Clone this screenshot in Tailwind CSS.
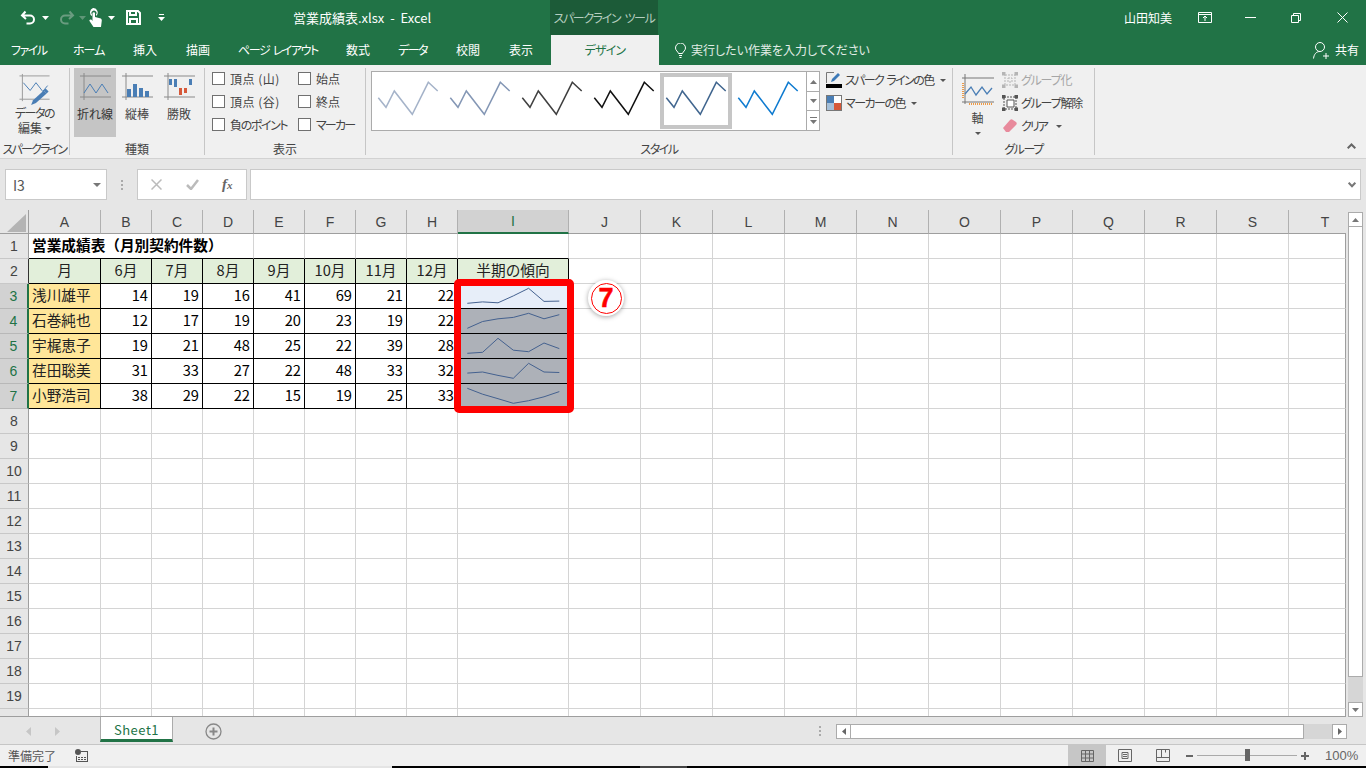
<!DOCTYPE html>
<html lang="ja">

<head>
    <meta charset="UTF-8">
    <title>営業成績表.xlsx - Excel</title>
    <script src="https://cdn.jsdelivr.net/npm/@tailwindcss/browser@4"></script>
</head>

<body class="w-[1366px] h-[768px] overflow-hidden bg-[#f0f0f0] text-[12px] leading-none text-[#444] font-['Noto_Sans_CJK_JP','Noto_Sans',sans-serif] [font-feature-settings:'palt']">

    <!-- Title bar -->
    <div class="flex items-center h-[35px] bg-[#217346] text-white">
        <svg class="shrink-0 ml-[20px] w-[17px] h-[16px]" viewBox="0 0 17 16" fill="none" stroke="#fff" stroke-width="2"><path d="M5.5 1.5 2 5.5 6 9M2.5 5.5H10a4 4 0 0 1 0 8H6.500"/></svg>
        <svg class="shrink-0 ml-[5px] w-[7px] h-[4px]" viewBox="0 0 7 4" fill="#fff"><path d="M0 0h7L3.500 4z"/></svg>
        <svg class="shrink-0 ml-[9px] w-[17px] h-[16px]" viewBox="0 0 17 16" fill="none" stroke="#6a9c80" stroke-width="2"><path d="M11.500 1.500 15 5.500 11 9M14.500 5.500H7a4 4 0 0 0 0 8h3.500"/></svg>
        <svg class="shrink-0 ml-[4px] w-[7px] h-[4px]" viewBox="0 0 7 4" fill="#5f9677"><path d="M0 0h7L3.500 4z"/></svg>
        <svg class="shrink-0 ml-[2px] w-[15px] h-[19px]" viewBox="0 0 15 19" fill="#fff"><path d="M5 0a4.500 4.500 0 0 1 3 8V6.500a2.500 2.500 0 1 0-4 0V8a4.500 4.500 0 0 1 1-8z"/><path d="M5 4.500a1.200 1.200 0 0 1 2 .8V9l5 1.200c1.200.3 1.800 1 1.800 2.200L13 19H5.500L1.500 13c-.5-1 .8-2.200 2-1.200L4.500 13V5.300a1 1 0 0 1 .5-.8z"/></svg>
        <svg class="shrink-0 ml-[5px] w-[7px] h-[4px]" viewBox="0 0 7 4" fill="#fff"><path d="M0 0h7L3.500 4z"/></svg>
        <svg class="shrink-0 ml-[11px] w-[15px] h-[15px]" viewBox="0 0 15 15" fill="none" stroke="#fff" stroke-width="2"><path d="M1 1h11l2 2v11H1z"/><path d="M4 1v4h6V1M4 14V9h7v5"/></svg>
        <svg class="shrink-0 ml-[17px] w-[7px] h-[7px]" viewBox="0 0 7 7" fill="#fff"><path d="M1 0h5v1H1zM0 3h7L3.500 7z"/></svg>
        <div class="shrink-0 ml-[128px] w-[257px] text-[13px] whitespace-nowrap">営業成績表.xlsx&nbsp; - &nbsp;Excel</div>
        <div class="shrink-0 flex items-center justify-center w-[108px] h-[35px] bg-[#1c5b38] text-[12px] tracking-[-1.4px] [word-spacing:3px] whitespace-nowrap text-[#b5cdbf]">スパークライン ツール</div>
        <div class="shrink-0 ml-[466px] w-[74px] text-[12px]">山田知美</div>
        <svg class="shrink-0 w-[14px] h-[11px]" viewBox="0 0 14 11" fill="none" stroke="#fff"><path d="M.5.500h13v10H.500zM1 2.500h12M7 9V4.500M5 6l2-2 2 2"/></svg>
        <div class="shrink-0 ml-[33px] w-[11px] h-px bg-white"></div>
        <svg class="shrink-0 ml-[35px] w-[10px] h-[10px]" viewBox="0 0 10 10" fill="none" stroke="#fff"><path d="M.5 2.500h7v7h-7zM2.500 2.500v-2h7v7h-2"/></svg>
        <svg class="shrink-0 ml-[36px] w-[11px] h-[11px]" viewBox="0 0 11 11" fill="none" stroke="#fff"><path d="M.5.500l10 10M10.500.500l-10 10"/></svg>
    </div>

    <!-- Tabs -->
    <div class="flex items-center h-[30px] bg-[#217346] text-white text-[12px] whitespace-nowrap">
        <div class="shrink-0 ml-[11px] w-[62px] tracking-[-1.5px]">ファイル</div>
        <div class="shrink-0 w-[60px] tracking-[-1px]">ホーム</div>
        <div class="shrink-0 w-[53px]">挿入</div>
        <div class="shrink-0 w-[52px]">描画</div>
        <div class="shrink-0 w-[108px] tracking-[-1.4px] [word-spacing:2px]">ページ レイアウト</div>
        <div class="shrink-0 w-[52px]">数式</div>
        <div class="shrink-0 w-[58px] tracking-[-1.5px]">データ</div>
        <div class="shrink-0 w-[53px]">校閲</div>
        <div class="shrink-0 w-[42px]">表示</div>
        <div class="shrink-0 flex items-center justify-center w-[108px] h-[30px] bg-[#f0f0f0] text-[#217346] tracking-[-0.8px]">デザイン</div>
        <svg class="shrink-0 ml-[16px] w-[11px] h-[15px]" viewBox="0 0 11 15" fill="none" stroke="#fff"><path d="M3.500 10.500C3 8.500.5 7.500.5 5a5 5 0 0 1 10 0c0 2.500-2.500 3.500-3 5.500zM4 12.500h3M4.500 14.500h2"/></svg>
        <div class="shrink-0 ml-[5px] w-[622px] text-[#e3ede7]">実行したい作業を入力してください</div>
        <svg class="shrink-0 w-[16px] h-[17px]" viewBox="0 0 16 17" fill="none" stroke="#fff"><circle cx="7" cy="5" r="4.500"/><path d="M.5 16.500c.5-4 2.500-7 6.500-7M10 14h6M13 11v6"/></svg>
        <div class="shrink-0 ml-[6px]">共有</div>
    </div>

    <!-- Ribbon -->
    <div class="flex h-[94px] pt-[3px] border-b border-[#d2d2d2] bg-[#f0f0f0]">
        <!-- Sparkline group -->
        <div class="shrink-0 flex flex-col items-center w-[70px] h-[87px] border-r border-[#c6c6c6]">
            <svg class="shrink-0 mt-[5px] w-[32px] h-[33px]" viewBox="0 0 32 34" fill="none">
                <path d="M3 1v28M0 3h31M0 27h31" stroke="#9a9a9a"/>
                <path d="M4 10l7 8 6-8 7 9 5-6" stroke="#4a7eb5"/>
                <path d="M12 33l2-5 11-10 3 3-11 10z" fill="#4a7eb5"/><path d="M25 18l2-2 3 3-2 2z" fill="#4a7eb5"/>
            </svg>
            <div class="shrink-0 h-[14px] leading-[14px] tracking-[-1.5px]">データの</div>
            <div class="shrink-0 mt-px h-[14px] leading-[14px] flex items-center gap-[3px]">編集 <svg class="w-[6px] h-[3px]" viewBox="0 0 6 3" fill="#555"><path d="M0 0h6L3 3z"/></svg></div>
            <div class="shrink-0 mt-[8px] whitespace-nowrap tracking-[-1.8px]">スパークライン</div>
        </div>
        <!-- Type group -->
        <div class="shrink-0 flex flex-col w-[135px] h-[87px] border-r border-[#c6c6c6]">
            <div class="flex h-[69px] pl-[4px]">
                <div class="flex flex-col items-center w-[42px] bg-[#c5c5c5]">
                    <svg class="shrink-0 mt-[5px] w-[31px] h-[27px]" viewBox="0 0 31 27" fill="none"><path d="M4 0v27M0 3h31M0 24h31" stroke="#8a8a8a"/><path d="M4 20l6-9 6 9 6-9 6 9" stroke="#4a7eb5"/></svg>
                    <div class="mt-[8px] text-[#333]">折れ線</div>
                </div>
                <div class="flex flex-col items-center w-[42px]">
                    <svg class="shrink-0 mt-[5px] w-[31px] h-[27px]" viewBox="0 0 31 27" fill="none"><path d="M4 0v27M0 3h31M0 24h31" stroke="#8a8a8a"/><path d="M5 16h4v8H5zM11 11h4v13h-4zM17 15h4v9h-4zM23 18h4v6h-4z" fill="#4a7eb5"/></svg>
                    <div class="mt-[8px]">縦棒</div>
                </div>
                <div class="flex flex-col items-center w-[42px]">
                    <svg class="shrink-0 mt-[5px] w-[31px] h-[27px]" viewBox="0 0 31 27" fill="none"><path d="M4 0v27M0 3h31M0 24h31" stroke="#8a8a8a"/><path d="M5 6h3v6H5zM10 6h3v8h-3zM25 6h3v6h-3z" fill="#4a7eb5"/><path d="M15 15h3v7h-3zM20 15h3v5h-3z" fill="#d6593a"/></svg>
                    <div class="mt-[8px]">勝敗</div>
                </div>
            </div>
            <div class="mt-[6px] text-center">種類</div>
        </div>
        <!-- Show group -->
        <div class="shrink-0 flex flex-col w-[161px] h-[87px] border-r border-[#c6c6c6]">
            <div class="grid grid-cols-[86px_auto] content-start gap-y-[10px] pl-[7px] pt-[4px] h-[75px] whitespace-nowrap">
                <div class="flex items-center gap-[5px] h-[13px]"><span class="w-[13px] h-[13px] bg-white border border-[#707070]"></span><span class="tracking-[0.5px]">頂点 (山)</span></div>
                <div class="flex items-center gap-[5px] h-[13px]"><span class="w-[13px] h-[13px] bg-white border border-[#707070]"></span>始点</div>
                <div class="flex items-center gap-[5px] h-[13px]"><span class="w-[13px] h-[13px] bg-white border border-[#707070]"></span><span class="tracking-[0.5px]">頂点 (谷)</span></div>
                <div class="flex items-center gap-[5px] h-[13px]"><span class="w-[13px] h-[13px] bg-white border border-[#707070]"></span>終点</div>
                <div class="flex items-center gap-[5px] h-[13px]"><span class="w-[13px] h-[13px] bg-white border border-[#707070]"></span><span class="tracking-[-1.4px]">負のポイント</span></div>
                <div class="flex items-center gap-[5px] h-[13px]"><span class="w-[13px] h-[13px] bg-white border border-[#707070]"></span><span class="tracking-[-1.8px]">マーカー</span></div>
            </div>
            <div class="text-center">表示</div>
        </div>
        <!-- Style group -->
        <div class="shrink-0 flex flex-col w-[587px] h-[87px] border-r border-[#c6c6c6]">
            <div class="flex h-[75px] pl-[5px] pt-[3px]">
                <div id="gallery" class="shrink-0 flex w-[435px] h-[60px] py-px bg-white border border-[#ababab] border-r-0"></div>
                <div class="shrink-0 flex flex-col w-[14px] h-[60px] bg-white border border-[#ababab]">
                    <div class="flex items-center justify-center h-[20px] border-b border-[#ababab]"><svg class="w-[7px] h-[4px]" viewBox="0 0 7 4" fill="#777"><path d="M3.500 0 7 4H0z"/></svg></div>
                    <div class="flex items-center justify-center h-[19px] border-b border-[#ababab]"><svg class="w-[7px] h-[4px]" viewBox="0 0 7 4" fill="#777"><path d="M0 0h7L3.500 4z"/></svg></div>
                    <div class="flex items-center justify-center flex-1"><svg class="w-[7px] h-[7px]" viewBox="0 0 7 7" fill="#777"><path d="M0 0h7v1H0zM0 3h7L3.500 7z"/></svg></div>
                </div>
                <div class="flex flex-col gap-[7px] ml-[6px] pt-px whitespace-nowrap">
                    <div class="flex items-center h-[16px]">
                        <svg class="shrink-0 w-[16px] h-[16px]" viewBox="0 0 16 16" fill="none"><path d="M8 .5H.5V11" stroke="#777"/><path d="M5 10l1-3 6-6 2 2-6 6z" fill="#3d7ab8"/><path d="M0 12h16v4H0z" fill="#000"/></svg>
                        <span class="ml-[3px] tracking-[-1.6px] [word-spacing:2px]">スパーク ラインの色</span>
                        <svg class="ml-[6px] w-[6px] h-[3px]" viewBox="0 0 6 3" fill="#555"><path d="M0 0h6L3 3z"/></svg>
                    </div>
                    <div class="flex items-center h-[16px]">
                        <svg class="shrink-0 w-[16px] h-[16px]" viewBox="0 0 16 16"><path d="M0 0h16v16H0z" fill="#777"/><path d="M1 1h7v7H1z" fill="#4a7eb5"/><path d="M8 1h7v7H8z" fill="#fff"/><path d="M1 8h7v7H1z" fill="#a5c0da"/><path d="M8 8h7v7H8z" fill="#d6593a"/></svg>
                        <span class="ml-[3px] tracking-[-1.5px]">マーカーの色</span>
                        <svg class="ml-[6px] w-[6px] h-[3px]" viewBox="0 0 6 3" fill="#555"><path d="M0 0h6L3 3z"/></svg>
                    </div>
                </div>
            </div>
            <div class="text-center tracking-[-1.5px]">スタイル</div>
        </div>
        <!-- Group group -->
        <div class="shrink-0 flex flex-col w-[142px] h-[87px] border-r border-[#c6c6c6]">
            <div class="flex h-[75px]">
                <div class="flex flex-col items-center w-[49px] pt-[6px]">
                    <svg class="shrink-0 w-[32px] h-[32px]" viewBox="0 0 32 32" fill="none"><path d="M3 0v30M0 4h32M0 28h32" stroke="#777"/><path d="M3 20l6-7 5 8 6-8 5 7 5-6" stroke="#4a7eb5" stroke-width="1.300"/><path d="M1 9v16M7 30h23" stroke="#ee9a45" stroke-width="2" stroke-dasharray="1 1"/></svg>
                    <div class="mt-[6px]">軸</div>
                    <svg class="mt-[8px] w-[6px] h-[3px]" viewBox="0 0 6 3" fill="#555"><path d="M0 0h6L3 3z"/></svg>
                </div>
                <div class="flex flex-col gap-[7px] pt-[4px] whitespace-nowrap">
                    <div class="flex items-center h-[16px] text-[#a6a6a6]">
                        <svg class="shrink-0 w-[16px] h-[16px]" viewBox="0 0 16 16" fill="none" stroke="#b5b5b5"><path d="M3 3h10v10H3zM6 6h4v4H6z" stroke-dasharray="2 1"/><path d="M0 0h3v3H0zM13 0h3v3h-3zM0 13h3v3H0zM13 13h3v3h-3z" fill="#b5b5b5"/></svg>
                        <span class="ml-[3px] tracking-[-1.2px]">グループ化</span>
                    </div>
                    <div class="flex items-center h-[16px]">
                        <svg class="shrink-0 w-[16px] h-[16px]" viewBox="0 0 16 16" fill="none" stroke="#555"><path d="M5 5h7v7H5z" fill="#fff"/><path d="M2 2h12v12H2z" stroke-dasharray="2 1"/><path d="M0 0h3v3H0zM13 0h3v3h-3zM0 13h3v3H0zM13 13h3v3h-3z" fill="#555"/></svg>
                        <span class="ml-[3px] tracking-[-1.2px]">グループ解除</span>
                    </div>
                    <div class="flex items-center h-[16px]">
                        <svg class="shrink-0 w-[16px] h-[14px]" viewBox="0 0 16 14"><path d="M1 9l7-8c1-1 2-1 3 0l3 2c1 1 1 2 0 3l-7 7H4z" fill="#e88a9c"/></svg>
                        <span class="ml-[3px] tracking-[-2px]">クリア</span>
                        <svg class="ml-[9px] w-[6px] h-[3px]" viewBox="0 0 6 3" fill="#555"><path d="M0 0h6L3 3z"/></svg>
                    </div>
                </div>
            </div>
            <div class="text-center tracking-[-1.4px]">グループ</div>
        </div>
        <div class="flex-1 flex justify-end items-end pb-[6px] pr-[10px] h-[87px]">
            <svg class="w-[9px] h-[6px]" viewBox="0 0 9 6" fill="none" stroke="#666" stroke-width="2"><path d="M.7 5.300 4.500 1.500l3.800 3.800"/></svg>
        </div>
    </div>

    <!-- Formula bar -->
    <div class="flex items-start h-[51px] pt-[10px] pl-[5px] bg-[#e6e6e6]">
        <div class="flex items-center justify-between w-[102px] h-[31px] pl-[7px] pr-[5px] bg-white border border-[#c9c9c9] text-[14px] text-[#555]">
            <span>I3</span>
            <svg class="w-[8px] h-[4px]" viewBox="0 0 8 4" fill="#777"><path d="M0 0h8L4 4z"/></svg>
        </div>
        <div class="flex flex-col justify-center gap-[2px] items-center w-[30px] h-[31px]">
            <span class="w-[2px] h-[2px] bg-[#aaa]"></span><span class="w-[2px] h-[2px] bg-[#aaa]"></span><span class="w-[2px] h-[2px] bg-[#aaa]"></span>
        </div>
        <div class="flex items-center w-[110px] h-[31px] bg-white border border-[#c9c9c9]">
            <svg class="ml-[13px] w-[11px] h-[11px]" viewBox="0 0 11 11" fill="none" stroke="#bbb" stroke-width="1.500"><path d="m.5.500 10 10M10.500.500l-10 10"/></svg>
            <svg class="ml-[24px] w-[13px] h-[11px]" viewBox="0 0 13 11" fill="none" stroke="#bbb" stroke-width="2.500"><path d="M1 6l4 4 7-9"/></svg>
            <span class="ml-[23px] text-[15px] italic font-bold font-['Liberation_Serif',serif] text-[#666]">f<span class="text-[11px]">x</span></span>
        </div>
        <div class="flex items-center justify-end w-[1111px] h-[31px] ml-[3px] pr-[4px] bg-white border border-[#c9c9c9]">
            <svg class="w-[8px] h-[6px]" viewBox="0 0 8 6" fill="none" stroke="#777" stroke-width="2"><path d="M.7.700 4 4.300 7.300.700"/></svg>
        </div>
    </div>

    <!-- Sheet -->
    <div class="flex h-[507px] bg-[#e6e6e6]">
        <div class="relative w-[1346px] h-[507px] overflow-hidden border-b border-[#9e9e9e] bg-white [font-feature-settings:normal]">
            <div id="sheet" class="grid grid-cols-[29px_72px_repeat(7,51px)_111px_repeat(10,72px)_57px] grid-rows-[24px_repeat(20,25px)]"></div>
            <!-- Callout over the sparkline cells -->
            <div class="absolute left-[454px] top-[69px] w-[120px] h-[134px] border-[7px] border-[#ff0000] rounded-[5px]"></div>
            <div class="absolute left-[588px] top-[70px] flex items-center justify-center w-[36px] h-[36px] rounded-full bg-white shadow-[0_1px_5px_rgba(0,0,0,0.35)]">
                <div class="flex items-center justify-center w-[31px] h-[31px] rounded-full border border-[#ff0000] text-[#ff0000] text-[27px] font-bold [-webkit-text-stroke:0.5px_#ff0000] font-['Liberation_Sans',sans-serif]">7</div>
            </div>
        </div>
        <!-- Vertical scrollbar -->
        <div class="flex flex-col w-[20px] h-[507px] pt-[2px] pl-[2px]">
            <div class="flex items-center justify-center w-[15px] h-[15px] bg-white border border-[#ababab]"><svg class="w-[7px] h-[4px]" viewBox="0 0 7 4" fill="#777"><path d="M3.500 0 7 4H0z"/></svg></div>
            <div class="w-[15px] h-[450px] bg-white border-x border-b border-[#ababab]"></div>
            <div class="w-[15px] h-[25px] bg-[#d6d6d6]"></div>
            <div class="flex items-center justify-center w-[15px] h-[15px] bg-white border border-[#ababab]"><svg class="w-[7px] h-[4px]" viewBox="0 0 7 4" fill="#777"><path d="M0 0h7L3.500 4z"/></svg></div>
        </div>
    </div>

    <!-- Sheet tabs and horizontal scrollbar -->
    <div class="flex items-start h-[28px] bg-[#e6e6e6] border-b border-[#c6c6c6]">
        <svg class="mt-[10px] ml-[26px] w-[5px] h-[9px]" viewBox="0 0 5 9" fill="#c6c6c6"><path d="M5 0v9L0 4.500z"/></svg>
        <svg class="mt-[10px] ml-[24px] w-[5px] h-[9px]" viewBox="0 0 5 9" fill="#c6c6c6"><path d="M0 0v9l5-4.500z"/></svg>
        <div class="flex items-center justify-center ml-[40px] w-[73px] h-[25px] pt-[3px] bg-white border-x border-[#ababab] border-b-[3px] border-b-[#217346] text-[#217346] text-[13px] tracking-[0.5px]">Sheet1</div>
        <svg class="mt-[6px] ml-[32px] w-[17px] h-[17px]" viewBox="0 0 17 17" fill="none" stroke="#888"><circle cx="8.500" cy="8.500" r="7.500" stroke-width="1.300"/><path d="M8.500 4.500v8M4.500 8.500h8" stroke-width="2"/></svg>
        <div class="flex flex-col gap-[2px] mt-[9px] ml-[597px]">
            <span class="w-[2px] h-[2px] bg-[#aaa]"></span><span class="w-[2px] h-[2px] bg-[#aaa]"></span><span class="w-[2px] h-[2px] bg-[#aaa]"></span>
        </div>
        <div class="flex items-center justify-center mt-[7px] ml-[15px] w-[15px] h-[15px] bg-white border border-[#ababab]"><svg class="w-[4px] h-[7px]" viewBox="0 0 4 7" fill="#666"><path d="M4 0v7L0 3.500z"/></svg></div>
        <div class="mt-[7px] w-[453px] h-[15px] bg-white border-y border-r border-[#ababab]"></div>
        <div class="mt-[7px] w-[28px] h-[15px] bg-[#d6d6d6]"></div>
        <div class="flex items-center justify-center mt-[7px] w-[15px] h-[15px] bg-white border border-[#ababab]"><svg class="w-[4px] h-[7px]" viewBox="0 0 4 7" fill="#666"><path d="M0 0v7l4-3.500z"/></svg></div>
    </div>

    <!-- Status bar -->
    <div class="flex items-center h-[21px] bg-[#f0f0f0] text-[#555]">
        <div class="ml-[8px] w-[67px]">準備完了</div>
        <svg class="w-[13px] h-[13px]" viewBox="0 0 13 13" fill="#555"><circle cx="3" cy="3" r="3"/><path d="M6 2h7v11H1V7h1v5h10V3H6zM3 8h2v1H3zM6 8h2v1H6zM9 8h2v1H9zM3 10h2v1H3zM6 10h2v1H6zM9 10h2v1H9z"/></svg>
        <div class="flex items-center justify-center ml-[980px] w-[38px] h-[21px] bg-[#c6c6c6]">
            <svg class="w-[13px] h-[12px]" viewBox="0 0 13 12" fill="none" stroke="#666"><path d="M.5.500h12v11H.5zM.5 4h12M.5 8h12M4.500.500v11M8.500.500v11"/></svg>
        </div>
        <svg class="ml-[12px] w-[14px] h-[13px]" viewBox="0 0 14 13" fill="none" stroke="#666"><path d="M.5.500h13v12H.5zM4 3.500h6v6H4zM5 5.500h4M5 7.500h4"/></svg>
        <svg class="ml-[24px] w-[14px] h-[13px]" viewBox="0 0 14 13" fill="none" stroke="#666"><path d="M.5.500h13v12H.5zM.5 8.500h13M5.500.500v8M9.500.500v3"/></svg>
        <div class="ml-[16px] w-[7px] h-[2px] bg-[#666]"></div>
        <div class="relative ml-[4px] w-[100px] h-px bg-[#aaa]">
            <div class="absolute left-[48px] top-[-6px] w-[5px] h-[12px] bg-[#666]"></div>
        </div>
        <svg class="ml-[4px] w-[8px] h-[8px]" viewBox="0 0 8 8" fill="#666"><path d="M3 0h2v3h3v2H5v3H3V5H0V3h3z"/></svg>
        <div class="ml-[16px] text-[13px] text-[#666] font-['Liberation_Sans',sans-serif]">100%</div>
    </div>

    <!-- Desktop strip under the window -->
    <div class="flex h-[2px] bg-black">
        <div class="ml-[48px] w-[344px] bg-[#e4e4e4]"></div>
        <div class="ml-[248px] w-[47px] bg-[#444]"></div>
    </div>

    <script>
        const columns = ['A', 'B', 'C', 'D', 'E', 'F', 'G', 'H', 'I', 'J', 'K', 'L', 'M', 'N', 'O', 'P', 'Q', 'R', 'S', 'T'];
        const people = [
            ['浅川雄平', 14, 19, 16, 41, 69, 21, 22],
            ['石巻純也', 12, 17, 19, 20, 23, 19, 22],
            ['宇梶恵子', 19, 21, 48, 25, 22, 39, 28],
            ['荏田聡美', 31, 33, 27, 22, 48, 33, 32],
            ['小野浩司', 38, 29, 22, 15, 19, 25, 33]
        ];
        const months = ['月', '6月', '7月', '8月', '9月', '10月', '11月', '12月', '半期の傾向'];

        // Line drawn inside a sparkline cell, scaled on the row's own min and max
        function sparkline(values, background) {
            const min = Math.min(...values);
            const max = Math.max(...values);
            const points = values.map((v, i) => {
                const x = 9.3 + i * 15.33;
                const y = 19.3 - (v - min) / (max - min) * 15;
                return x.toFixed(1) + ',' + y.toFixed(1);
            }).join(' ');
            return `<div class="${background} border-r border-b border-black"><svg class="block w-[110px] h-[24px]" viewBox="0 0 110 24" fill="none"><polyline points="${points}" stroke="#44618f"/></svg></div>`;
        }

        function cell(classes, text) {
            return `<div class="flex items-center pb-[2px] overflow-hidden whitespace-nowrap text-[14.67px] text-[#222] ${classes}">${text}</div>`;
        }

        function renderSheet() {
            let html = '';

            // Column letters
            html += `<div class="relative bg-[#e6e6e6] border-r border-b border-[#9e9e9e]"><svg class="absolute left-[7px] top-[4px] w-[19px] h-[18px]" viewBox="0 0 19 18" fill="#b4b4b4"><path d="M19 0v18H0z"/></svg></div>`;
            columns.forEach(c => {
                if (c === 'I') {
                    html += `<div class="flex items-center justify-center bg-[#d2d2d2] border-r border-r-[#b0b0b0] border-b-2 border-b-[#217346] text-[14px] text-[#217346] font-['Liberation_Sans',sans-serif]">${c}</div>`;
                } else if (c === 'T') {
                    html += `<div class="flex items-center justify-center pl-[15px] bg-[#e6e6e6] border-b border-[#9e9e9e] text-[14px] text-[#444] font-['Liberation_Sans',sans-serif]">${c}</div>`;
                } else {
                    html += `<div class="flex items-center justify-center bg-[#e6e6e6] border-r border-r-[#b0b0b0] border-b border-b-[#9e9e9e] text-[14px] text-[#444] font-['Liberation_Sans',sans-serif]">${c}</div>`;
                }
            });

            for (let row = 1; row <= 20; row++) {
                const person = people[row - 3];

                // Row number
                if (person) {
                    html += `<div class="flex items-center justify-center bg-[#d2d2d2] border-r-2 border-r-[#217346] border-b border-b-[#b8b8b8] text-[14px] text-[#217346] font-['Liberation_Sans',sans-serif]">${row}</div>`;
                } else if (row === 2) {
                    html += `<div class="flex items-center justify-center bg-[#e6e6e6] border-r border-r-[#333] border-b border-b-[#c8c8c8] text-[14px] text-[#444] font-['Liberation_Sans',sans-serif]">${row}</div>`;
                } else {
                    html += `<div class="flex items-center justify-center bg-[#e6e6e6] border-r border-r-[#9e9e9e] border-b border-b-[#c8c8c8] text-[14px] text-[#444] font-['Liberation_Sans',sans-serif]">${row}</div>`;
                }

                if (row === 1) {
                    html += cell('col-span-4 pl-[3px] font-bold text-black border-r border-r-[#d4d4d4] border-b border-b-black text-[14.4px]', '営業成績表（月別契約件数）');
                    for (let c = 4; c < 20; c++) {
                        html += c < 9
                            ? cell('border-r border-r-[#d4d4d4] border-b border-b-black', '')
                            : cell(c === 19 ? 'border-r border-r-[#9e9e9e] border-b border-b-[#d4d4d4]' : 'border-r border-b border-[#d4d4d4]', '');
                    }
                } else if (row === 2) {
                    months.forEach(m => {
                        html += cell('justify-center bg-[#e2efda] border-r border-b border-black', m);
                    });
                    for (let c = 9; c < 20; c++) {
                        html += cell(c === 19 ? 'border-r border-r-[#9e9e9e] border-b border-b-[#d4d4d4]' : 'border-r border-b border-[#d4d4d4]', '');
                    }
                } else if (person) {
                    html += cell('pl-[3px] bg-[#ffe699] border-r border-b border-black', person[0]);
                    person.slice(1).forEach(v => {
                        html += cell('justify-end pr-[3px] border-r border-b border-black text-black', v);
                    });
                    html += sparkline(person.slice(1), row === 3 ? 'bg-[#e7eef9]' : 'bg-[#adb1b8]');
                    for (let c = 9; c < 20; c++) {
                        html += cell(c === 19 ? 'border-r border-r-[#9e9e9e] border-b border-b-[#d4d4d4]' : 'border-r border-b border-[#d4d4d4]', '');
                    }
                } else {
                    for (let c = 0; c < 20; c++) {
                        html += cell(c === 19 ? 'border-r border-r-[#9e9e9e] border-b border-b-[#d4d4d4]' : 'border-r border-b border-[#d4d4d4]', '');
                    }
                }
            }
            document.getElementById('sheet').innerHTML = html;
        }

        // Style gallery thumbnails
        function renderGallery() {
            const colours = ['#a5b3c9', '#8497b5', '#404040', '#111111', '#41668f', '#0f7bd0'];
            document.getElementById('gallery').innerHTML = colours.map((colour, i) => {
                const box = i === 4
                    ? 'border-[4px] border-[#c6c6c6]'
                    : 'border-[4px] border-transparent';
                return `<div class="shrink-0 w-[72px] h-[56px] ${box}"><svg class="block w-[64px] h-[48px]" viewBox="0 0 64 48" fill="none"><polyline points="2.3,20.700 10,30.300 18.300,14 36.300,37.300 52.300,5.300 61.700,14" stroke="${colour}" stroke-width="1.500"/></svg></div>`;
            }).join('');
        }

        renderSheet();
        renderGallery();
    </script>

</body>

</html>
